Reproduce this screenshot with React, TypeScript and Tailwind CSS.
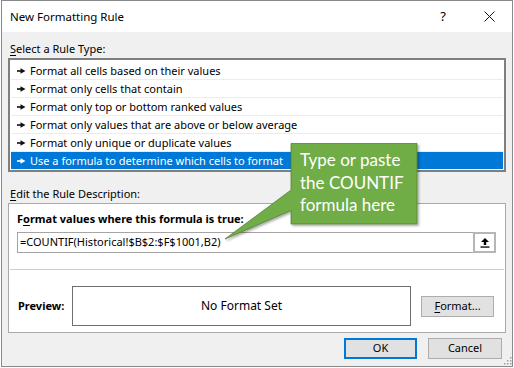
import React from "react";

const RULES = [
  "Format all cells based on their values",
  "Format only cells that contain",
  "Format only top or bottom ranked values",
  "Format only values that are above or below average",
  "Format only unique or duplicate values",
  "Use a formula to determine which cells to format",
];

function Bullet({ color }: { color: string }) {
  return (
    <svg width="9" height="6" viewBox="0 0 9 6" className="shrink-0">
      <rect x="0" y="2.2" width="4" height="1.6" fill={color} />
      <path d="M3.5 0.3 L8.5 3 L3.5 5.7 Z" fill={color} />
    </svg>
  );
}

function Btn({ children, primary, className }: { children: React.ReactNode; primary?: boolean; className?: string }) {
  return (
    <div
      className={
        "h-[21px] flex items-center justify-center bg-[#e1e1e1] " +
        (primary ? "border-2 border-[#0078d7] " : "border border-[#adadad] ") +
        (className ?? "")
      }
    >
      {children}
    </div>
  );
}

export default function App() {
  return (
    <div className="relative w-[514px] h-[368px] bg-white text-[11px] text-black font-['Noto_Sans',sans-serif]">
      <div className="ml-[1px] w-[512px] h-[367px] border border-[#8a8a8a] bg-[#f0f0f0] flex flex-col">
        {/* title bar */}
        <div className="h-[31px] bg-white flex items-center pl-[8px] shrink-0">
          <span className="text-[11.5px]">New Formatting Rule</span>
          <div className="ml-auto flex h-full">
            <div className="w-[46px] flex items-center justify-center text-[13px]">?</div>
            <div className="w-[46px] flex items-center justify-center">
              <svg width="11" height="11" viewBox="0 0 11 11">
                <path d="M0.5 0.5 L10.5 10.5 M10.5 0.5 L0.5 10.5" stroke="#111" strokeWidth="1" />
              </svg>
            </div>
          </div>
        </div>

        {/* rule type */}
        <div className="mt-[9px] ml-[8px] leading-[16px] h-[16px]">
          <span className="underline underline-offset-2">S</span>elect a Rule Type:
        </div>
        <div className="mt-[1px] ml-[6px] w-[498px] h-[114px] border-2 border-[#7f7f7f] bg-white pt-[2px] px-[1px]">
          {RULES.map((r, i) => {
            const sel = i === RULES.length - 1;
            return (
              <div
                key={r}
                className={
                  "flex items-center gap-[4px] pl-[6px] " +
                  (sel ? "h-[17px] bg-[#0078d7] text-white" : "h-[18px] border-b border-[#ececec]")
                }
              >
                <Bullet color={sel ? "#fff" : "#111"} />
                <span className="leading-[16px]">{r}</span>
              </div>
            );
          })}
        </div>

        {/* description */}
        <div className="mt-[14px] ml-[8px] leading-[16px] h-[16px]">
          <span className="underline underline-offset-2">E</span>dit the Rule Description:
        </div>
        <div className="mt-[1px] ml-[6px] w-[498px] h-[130px] border border-[#a9a9a9] bg-white pt-[7px] pb-[6px] flex flex-col">
          <div className="ml-[8px] h-[16px] leading-[16px] font-bold">
            F<span className="underline underline-offset-2">o</span>rmat values where this formula is true:
          </div>
          <div className="mt-[5px] ml-[8px] w-[479px] h-[21px] border border-[#a5a5a5] flex items-center">
            <span className="pl-[2px] flex-1">=COUNTIF(Historical!$B$2:$F$1001,B2)</span>
            <div className="w-[23px] h-[21px] -mr-[1px] border-2 border-[#b6b6b6] bg-white flex items-center justify-center">
              <svg width="10" height="11" viewBox="0 0 10 11">
                <path d="M5 1 L9 5 H6.2 V8 H3.8 V5 H1 Z" fill="#000" />
                <rect x="0.5" y="9.4" width="9" height="1.3" fill="#000" />
              </svg>
            </div>
          </div>
          <div className="mt-[16px] ml-[1px] w-[494px] h-[1px] bg-[#cfcfcf]" />
          <div className="mt-[16px] flex items-center h-[40px]">
            <span className="ml-[9px] w-[54px] font-bold">Preview:</span>
            <div className="w-[339px] h-[40px] border border-[#6e6e6e] flex items-center justify-center text-[12px]">
              No Format Set
            </div>
            <Btn className="ml-[10px] w-[73px]">
              <span>
                <span className="underline underline-offset-2">F</span>ormat...
              </span>
            </Btn>
          </div>
        </div>

        {/* buttons */}
        <div className="mt-[5px] flex justify-end pr-[10px] gap-[11px]">
          <Btn primary className="w-[73px]">OK</Btn>
          <Btn className="w-[74px]">Cancel</Btn>
        </div>
      </div>

      {/* resize grip */}
      <svg className="absolute left-[503px] top-[356px]" width="9" height="9" viewBox="0 0 9 9">
        {[
          [7, 1], [4, 4], [7, 4], [1, 7], [4, 7], [7, 7],
        ].map(([x, y]) => (
          <rect key={`${x}-${y}`} x={x} y={y} width="1.5" height="1.5" fill="#a0a0a0" />
        ))}
      </svg>

      {/* callout */}
      <svg className="absolute left-0 top-0 pointer-events-none" width="514" height="368" viewBox="0 0 514 368">
        <defs>
          <filter id="sh" x="-20%" y="-20%" width="140%" height="140%">
            <feDropShadow dx="1.5" dy="1.5" stdDeviation="1.2" floodColor="#000" floodOpacity="0.35" />
          </filter>
        </defs>
        <path
          d="M291 143.5 H417 V224 H291 V210.5 L225 239 L291 190 Z"
          fill="#70ad47"
          stroke="#507e32"
          strokeWidth="0.75"
          filter="url(#sh)"
        />
      </svg>
      <div className="absolute left-[300px] top-[149px] text-white text-[17px] leading-[22.5px] font-['Lato',sans-serif] whitespace-nowrap">
        <div>Type or paste</div>
        <div>the COUNTIF</div>
        <div>formula here</div>
      </div>
    </div>
  );
}
